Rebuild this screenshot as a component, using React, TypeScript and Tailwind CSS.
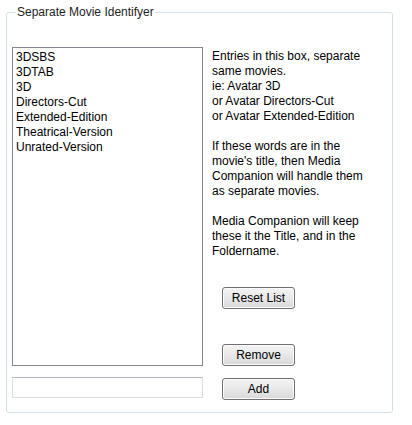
const entries = [
  '3DSBS',
  '3DTAB',
  '3D',
  'Directors-Cut',
  'Extended-Edition',
  'Theatrical-Version',
  'Unrated-Version',
]

const help = [
  'Entries in this box, separate',
  'same movies.',
  'ie: Avatar 3D',
  'or Avatar Directors-Cut',
  'or Avatar Extended-Edition',
  '',
  'If these words are in the',
  "movie's title, then Media",
  'Companion will handle them',
  'as separate movies.',
  '',
  'Media Companion will keep',
  'these it the Title, and in the',
  'Foldername.',
]

function WinButton({ label, className }: { label: string; className?: string }) {
  return (
    <button
      className={`h-[22px] w-[73px] rounded-[3px] border border-[#707070] bg-gradient-to-b from-[#f4f4f4] via-[#e8e8e8] to-[#d9d9d9] text-[12px] leading-none text-black shadow-[inset_0_0_0_1px_#fcfcfc] ${className ?? ''}`}
    >
      {label}
    </button>
  )
}

export default function App() {
  return (
    <div className="h-[425px] w-[412px] bg-white pl-[6px] pt-[12px] font-['Liberation_Sans',Arial,sans-serif] text-[12px] text-black">
      <div className="relative h-[401px] w-[387px] rounded-[3px] border border-[#d5dfe5]">
        <span className="absolute left-[9px] top-[-8px] bg-white px-[1px] leading-[15px] text-[#1e1e1e]">
          Separate Movie Identifyer
        </span>

        <div className="flex pl-[5px] pt-[34px]">
          <div className="flex flex-col">
            <div className="h-[319px] w-[191px] border border-[#828790] pl-[3px] pt-[2px]">
              {entries.map((e) => (
                <div key={e} className="leading-[15px]">
                  {e}
                </div>
              ))}
            </div>
            <input
              className="mt-[11px] h-[21px] w-[191px] border border-[#dadde2] border-t-[#b5b9bf] outline-none"
              type="text"
            />
          </div>

          <div className="ml-[9px] flex flex-col">
            <div className="pt-[2px] leading-[15px]">
              {help.map((line, i) => (
                <div key={i} className="h-[15px] whitespace-nowrap">
                  {line}
                </div>
              ))}
            </div>
            <WinButton label="Reset List" className="ml-[10px] mt-[28px]" />
            <WinButton label="Remove" className="ml-[10px] mt-[35px]" />
            <WinButton label="Add" className="ml-[10px] mt-[12px]" />
          </div>
        </div>
      </div>
    </div>
  )
}
